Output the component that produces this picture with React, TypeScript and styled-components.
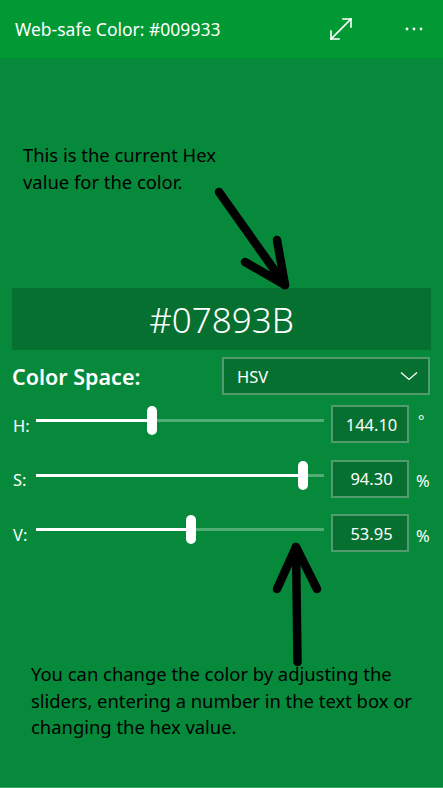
import React from "react";
import styled, { createGlobalStyle } from "styled-components";

const GlobalStyle = createGlobalStyle`
  html, body { margin: 0; padding: 0; background: #07893b; }
  body { font-family: "Noto Sans", "Open Sans", sans-serif; overflow: hidden; }
  * { box-sizing: border-box; }
`;

const Page = styled.div`
  position: relative;
  width: 443px;
  height: 788px;
  display: flex;
  flex-direction: column;
  background: #07893b;
  color: #fff;
`;

const Header = styled.header`
  height: 58px;
  flex: none;
  background: #009933;
  display: flex;
  align-items: center;
  padding: 0 15px;
`;

const Title = styled.div`
  flex: 1;
  font-size: 17.5px;
  color: #fff;
  margin-top: -1px;
`;

const HeaderIcons = styled.div`
  display: flex;
  align-items: center;
  gap: 50px;
  margin-right: 4px;
`;

const Body = styled.main`
  flex: 1;
  display: flex;
  flex-direction: column;
  border-bottom: 1px solid #3da866;
`;

const Note = styled.p<{ $top: number; $left: number; $lh: number }>`
  margin: ${(p) => p.$top}px 0 0 ${(p) => p.$left}px;
  font-size: 18.4px;
  line-height: ${(p) => p.$lh}px;
  color: #000;
`;

const HexBox = styled.div`
  margin: 93px 12px 0 12px;
  height: 62px;
  background: #067030;
  display: flex;
  align-items: center;
  justify-content: center;
  font-size: 35px;
  font-weight: 300;
  color: #fff;
`;

const SpaceRow = styled.div`
  margin: 7px 13px 0 12px;
  height: 38px;
  display: flex;
  align-items: center;
  justify-content: space-between;
`;

const SpaceLabel = styled.div`
  font-size: 21.5px;
  font-weight: 600;
  margin-top: 1px;
`;

const Select = styled.div`
  width: 208px;
  height: 38px;
  background: #067030;
  border: 2px solid rgba(255, 255, 255, 0.3);
  display: flex;
  align-items: center;
  justify-content: space-between;
  padding: 0 10px 0 13px;
  font-size: 16.5px;
`;

const Sliders = styled.div`
  margin: 10px 0 0 13px;
  display: flex;
  flex-direction: column;
  gap: 16.5px;
`;

const Row = styled.div`
  height: 38px;
  display: flex;
  align-items: center;
`;

const ChanLabel = styled.div`
  width: 23px;
  font-size: 16.5px;
  margin-top: 2px;
`;

const Slider = styled.div`
  position: relative;
  width: 288px;
  height: 29px;
  align-self: flex-start;
  margin-top: 1px;
`;

const Track = styled.div`
  position: absolute;
  left: 0;
  right: 0;
  top: 13px;
  height: 3px;
  background: rgba(255, 255, 255, 0.3);
`;

const Fill = styled.div`
  position: absolute;
  left: 0;
  top: 13px;
  height: 3px;
  background: #fff;
`;

const Thumb = styled.div`
  position: absolute;
  top: 0;
  width: 10px;
  height: 29px;
  border-radius: 5px;
  background: #fff;
  transform: translateX(-50%);
`;

const ValueBox = styled.div`
  width: 78px;
  height: 38px;
  margin-left: 7px;
  background: #067030;
  border: 2px solid rgba(255, 255, 255, 0.3);
  display: flex;
  align-items: center;
  justify-content: center;
  font-size: 16.5px;
  padding-left: 3px;
`;

const Unit = styled.div<{ $deg?: boolean }>`
  margin-left: ${(p) => (p.$deg ? "9px" : "7px")};
  font-size: ${(p) => (p.$deg ? "15px" : "16.5px")};
  margin-top: ${(p) => (p.$deg ? "-8px" : "4px")};
`;

const Overlay = styled.svg`
  position: absolute;
  left: 0;
  top: 0;
  pointer-events: none;
`;

const ExpandIcon = () => (
  <svg width="26" height="26" viewBox="0 0 26 26" fill="none" stroke="#fff" strokeWidth="1.6" strokeLinecap="square">
    <line x1="3" y1="23" x2="23" y2="3" />
    <polyline points="15,3 23,3 23,11" />
    <polyline points="3,15 3,23 11,23" />
  </svg>
);

const MoreIcon = () => (
  <svg width="20" height="6" viewBox="0 0 20 6" fill="#fff">
    <circle cx="3" cy="3" r="1.4" />
    <circle cx="10" cy="3" r="1.4" />
    <circle cx="17" cy="3" r="1.4" />
  </svg>
);

const Chevron = () => (
  <svg width="18" height="10" viewBox="0 0 18 10" fill="none" stroke="#fff" strokeWidth="1.3">
    <polyline points="1,1.5 9,8.5 17,1.5" />
  </svg>
);

const channels = [
  { key: "H:", value: 144.1, max: 360, text: "144.10", unit: "°", deg: true },
  { key: "S:", value: 94.3, max: 100, text: "94.30", unit: "%", deg: false },
  { key: "V:", value: 53.95, max: 100, text: "53.95", unit: "%", deg: false },
];

const TRACK = 288;
const THUMB = 10;

export default function App() {
  return (
    <>
      <GlobalStyle />
      <Page>
        <Header>
          <Title>Web-safe Color: #009933</Title>
          <HeaderIcons>
            <ExpandIcon />
            <MoreIcon />
          </HeaderIcons>
        </Header>
        <Body>
          <Note $top={83} $left={23} $lh={27}>
            This is the current Hex
            <br />
            value for the color.
          </Note>
          <HexBox>#07893B</HexBox>
          <SpaceRow>
            <SpaceLabel>Color Space:</SpaceLabel>
            <Select>
              <span>HSV</span>
              <Chevron />
            </Select>
          </SpaceRow>
          <Sliders>
            {channels.map((c) => {
              const pos = THUMB / 2 + (c.value / c.max) * (TRACK - THUMB);
              return (
                <Row key={c.key}>
                  <ChanLabel>{c.key}</ChanLabel>
                  <Slider>
                    <Track />
                    <Fill style={{ width: pos }} />
                    <Thumb style={{ left: pos }} />
                  </Slider>
                  <ValueBox>{c.text}</ValueBox>
                  <Unit $deg={c.deg}>{c.unit}</Unit>
                </Row>
              );
            })}
          </Sliders>
          <Note $top={109} $left={31} $lh={26.7}>
            You can change the color by adjusting the
            <br />
            sliders, entering a number in the text box or
            <br />
            changing the hex value.
          </Note>
        </Body>
        <Overlay width="443" height="788" viewBox="0 0 443 788">
          <g stroke="#000" strokeWidth="8.5" strokeLinecap="round" strokeLinejoin="round" fill="none">
            <line x1="219" y1="192" x2="285" y2="285" />
            <polyline points="245,262 285,285 277,240" />
            <line x1="297.5" y1="662" x2="296" y2="547" />
            <polyline points="277,589 296,547 317,589" />
          </g>
        </Overlay>
      </Page>
    </>
  );
}
